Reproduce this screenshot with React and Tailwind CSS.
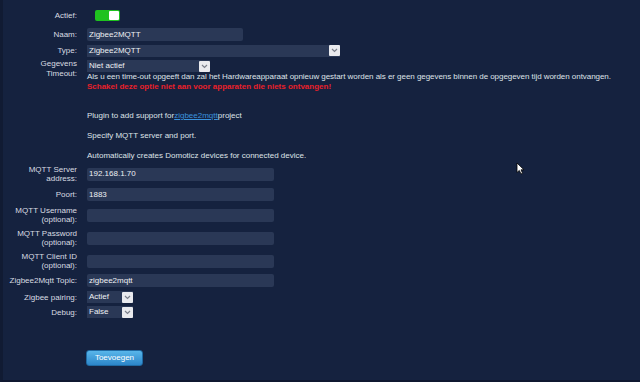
import React from 'react';

const Label = ({ children }) => (
  <div className="w-[74px] shrink-0 text-right leading-[9px] text-[#d9dce2]">{children}</div>
);

const TextInput = ({ value = '', w = 'w-[187px]' }) => (
  <div className={`${w} h-[13px] ml-[10px] bg-[#2a3856] rounded-[2px] px-[2px] flex items-center text-[#eef0f4]`}>
    {value}
  </div>
);

const Arrow = () => (
  <div className="w-[11px] h-[11px] bg-[#e9eaee] rounded-[1px] flex items-center justify-center shrink-0">
    <svg width="7" height="5" viewBox="0 0 7 5">
      <path d="M1 1 L3.5 3.5 L6 1" fill="none" stroke="#7a7f8a" strokeWidth="1.2" />
    </svg>
  </div>
);

const Select = ({ value, w }) => (
  <div className={`${w} h-[12px] ml-[10px] bg-[#2a3856] flex items-center justify-between pl-[2px] text-[#eef0f4]`}>
    <span>{value}</span>
    <Arrow />
  </div>
);

export default function App() {
  return (
    <div
      className="w-[640px] h-[382px] bg-[#15223f] border-l-[3px] border-l-[#111b33] border-b-[2px] border-b-[#0f1830] relative overflow-hidden text-[8px] text-[#d9dce2]"
      style={{ fontFamily: '"Liberation Sans", Arial, sans-serif' }}
    >
      <div className="flex flex-col">
        {/* Actief */}
        <div className="flex items-center mt-[10px] h-[11px]">
          <Label>Actief:</Label>
          <div className="ml-[18px] w-[25px] h-[11px] bg-[#1fc21f] rounded-[2px] flex items-center justify-end pr-[1px]">
            <div className="w-[10px] h-[9px] bg-white rounded-[1px]" />
          </div>
        </div>

        <div className="flex items-center mt-[7px] h-[13px]">
          <Label>Naam:</Label>
          <TextInput value="Zigbee2MQTT" w="w-[156px]" />
        </div>

        <div className="flex items-center mt-[3px] h-[13px]">
          <Label>Type:</Label>
          <Select value="Zigbee2MQTT" w="w-[253px]" />
        </div>

        <div className="flex items-start mt-[2px]">
          <div className="w-[74px] shrink-0 text-right leading-[10px] text-[#d9dce2]">
            Gegevens
            <br />
            Timeout:
          </div>
          <div className="flex flex-col">
            <div className="mt-[1px]">
              <Select value="Niet actief" w="w-[123px]" />
            </div>
            <div className="ml-[10px] leading-[10px] text-[#dfe2e8] tracking-[-0.05px]">
              Als u een time-out opgeeft dan zal het Hardwareapparaat opnieuw gestart worden als er geen gegevens binnen de opgegeven tijd worden ontvangen.
            </div>
            <div className="ml-[10px] leading-[10px] text-[#e8202a] font-bold">
              Schakel deze optie niet aan voor apparaten die niets ontvangen!
            </div>
          </div>
        </div>

        <div className="ml-[84px] flex flex-col leading-[10px] text-[#dfe2e8]">
          <div className="mt-[19px]">
            Plugin to add support for<span className="text-[#3b92dd] underline">zigbee2mqtt</span>project
          </div>
          <div className="mt-[10px]">Specify MQTT server and port.</div>
          <div className="mt-[10px]">Automatically creates Domoticz devices for connected device.</div>
        </div>

        <div className="flex items-center mt-[4px] h-[18px]">
          <Label>MQTT Server<br />address:</Label>
          <TextInput value="192.168.1.70" />
        </div>

        <div className="flex items-center mt-[5px] h-[13px]">
          <Label>Poort:</Label>
          <TextInput value="1883" />
        </div>

        <div className="flex items-center mt-[5px] h-[18px]">
          <Label>MQTT Username<br />(optional):</Label>
          <TextInput />
        </div>

        <div className="flex items-center mt-[5px] h-[18px]">
          <Label>MQTT Password<br />(optional):</Label>
          <TextInput />
        </div>

        <div className="flex items-center mt-[5px] h-[18px]">
          <Label>MQTT Client ID<br />(optional):</Label>
          <TextInput />
        </div>

        <div className="flex items-center mt-[4px] h-[13px]">
          <Label>Zigbee2Mqtt Topic:</Label>
          <TextInput value="zigbee2mqtt" />
        </div>

        <div className="flex items-center mt-[4px] h-[12px]">
          <Label>Zigbee pairing:</Label>
          <Select value="Actief" w="w-[46px]" />
        </div>

        <div className="flex items-center mt-[3px] h-[12px]">
          <Label>Debug:</Label>
          <Select value="False" w="w-[46px]" />
        </div>

        <div className="mt-[32px] ml-[83px]">
          <button className="w-[57px] h-[16px] rounded-[3px] border border-[#1f6aa3] bg-gradient-to-b from-[#58b6ea] to-[#2c86c9] text-white text-[8px] flex items-center justify-center">
            Toevoegen
          </button>
        </div>
      </div>

      {/* mouse cursor */}
      <svg className="absolute left-[513px] top-[162px]" width="9" height="13" viewBox="0 0 9 13">
        <path d="M1 1 L1 10.5 L3.3 8.4 L5 12 L6.6 11.3 L5 7.8 L8 7.8 Z" fill="#ffffff" stroke="#000000" strokeWidth="0.8" />
      </svg>
    </div>
  );
}
